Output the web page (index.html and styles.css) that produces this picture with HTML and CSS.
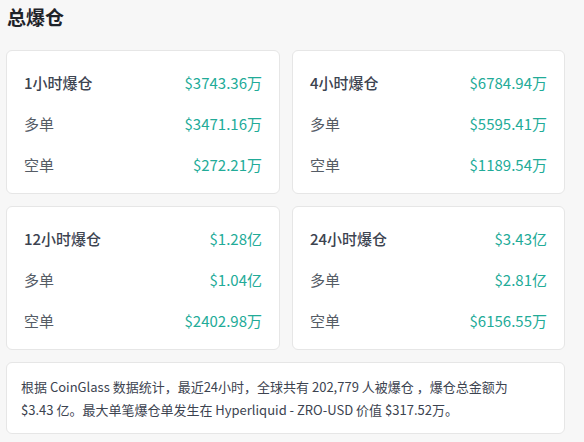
FILE: index.html
```html
<!DOCTYPE html>
<html lang="zh-CN">
<head>
<meta charset="utf-8">
<link rel="stylesheet" href="styles.css">
</head>
<body>
<div class="page">
  <h2 class="title">总爆仓</h2>
  <div class="grid">
    <div class="card">
      <div class="row head"><span class="label">1小时爆仓</span><span class="val">$3743.36万</span></div>
      <div class="row"><span class="label">多单</span><span class="val">$3471.16万</span></div>
      <div class="row"><span class="label">空单</span><span class="val">$272.21万</span></div>
    </div>
    <div class="card">
      <div class="row head"><span class="label">4小时爆仓</span><span class="val">$6784.94万</span></div>
      <div class="row"><span class="label">多单</span><span class="val">$5595.41万</span></div>
      <div class="row"><span class="label">空单</span><span class="val">$1189.54万</span></div>
    </div>
    <div class="card">
      <div class="row head"><span class="label">12小时爆仓</span><span class="val">$1.28亿</span></div>
      <div class="row"><span class="label">多单</span><span class="val">$1.04亿</span></div>
      <div class="row"><span class="label">空单</span><span class="val">$2402.98万</span></div>
    </div>
    <div class="card">
      <div class="row head"><span class="label">24小时爆仓</span><span class="val">$3.43亿</span></div>
      <div class="row"><span class="label">多单</span><span class="val">$2.81亿</span></div>
      <div class="row"><span class="label">空单</span><span class="val">$6156.55万</span></div>
    </div>
  </div>
  <div class="note">
    <p>根据 CoinGlass 数据统计，最近24小时，全球共有 202,779 人被爆仓 ，爆仓总金额为<br>$3.43 亿。最大单笔爆仓单发生在 Hyperliquid - ZRO-USD 价值 $317.52万。</p>
  </div>
</div>
</body>
</html>
```

FILE: styles.css
```css
html, body {
  margin: 0;
  padding: 0;
  background: #f7f7f7;
}
body {
  font-family: "Noto Sans CJK SC", "Noto Sans", sans-serif;
  color: #3c4350;
}
.page {
  width: 559px;
  padding: 0 0 0 6px;
}
.title {
  margin: 0;
  padding: 4px 0 0 1px;
  height: 30px;
  font-size: 19px;
  line-height: 26px;
  font-weight: 700;
  color: #1e2329;
}
.grid {
  margin-top: 16px;
  display: grid;
  grid-template-columns: 274px 273px;
  column-gap: 12px;
  row-gap: 12px;
}
.card {
  box-sizing: border-box;
  height: 144px;
  background: #fff;
  border: 1px solid #e6e6e6;
  border-radius: 6px;
  padding: 17px 17px 0 17px;
  display: flex;
  flex-direction: column;
  gap: 13px;
}
.row {
  display: flex;
  justify-content: space-between;
  align-items: center;
  height: 28px;
  font-size: 15px;
}
.label {
  color: #555c66;
}
.head .label {
  color: #3c4350;
  font-weight: 500;
}
.val {
  color: #22ab98;
}
.note {
  box-sizing: border-box;
  margin-top: 12px;
  height: 72px;
  background: #fff;
  border: 1px solid #e6e6e6;
  border-radius: 6px;
  padding: 12px 14px;
}
.note p {
  margin: 0;
  font-size: 13px;
  line-height: 23px;
  color: #3c4350;
}
```
